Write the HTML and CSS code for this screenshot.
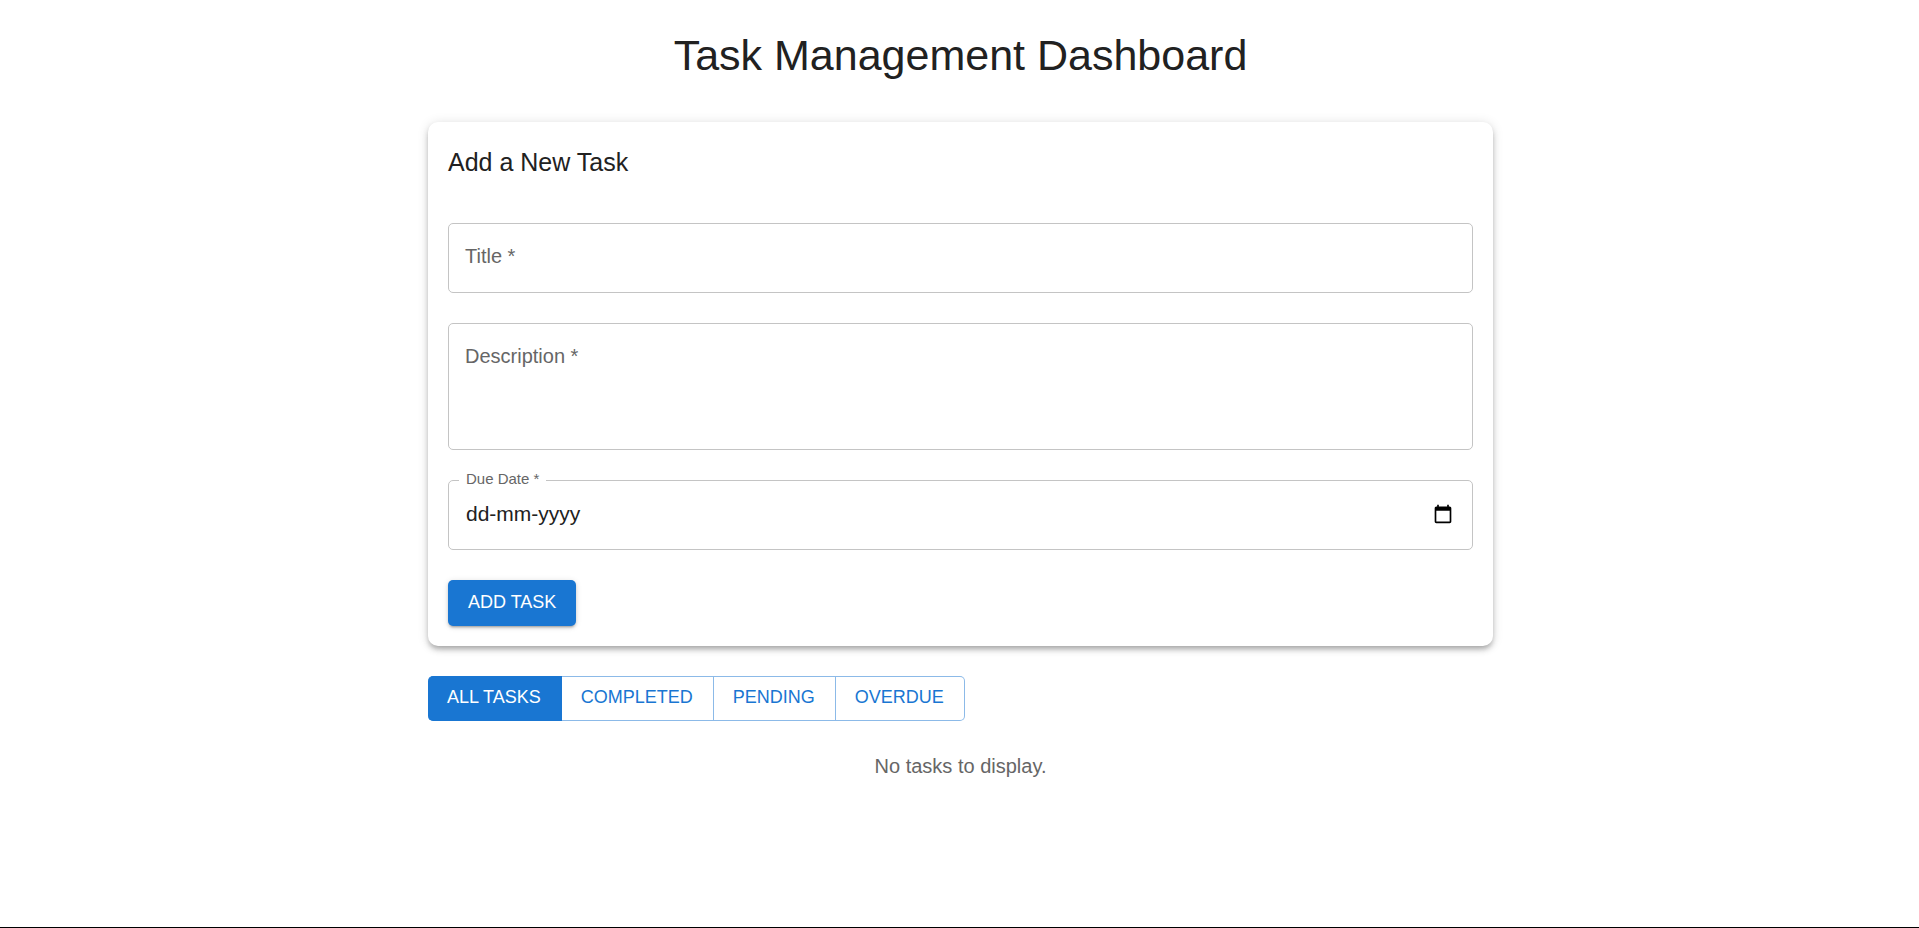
FILE: index.html
```html
<!DOCTYPE html>
<html lang="en">
<head>
<meta charset="utf-8">
<title>Task Management Dashboard</title>
<link rel="stylesheet" href="styles.css">
</head>
<body>
<main class="page">
  <div class="container">
    <h1 class="page-title">Task Management Dashboard</h1>

    <form class="card">
      <h2 class="card-title">Add a New Task</h2>
      <div class="field">
        <input class="control" id="title" type="text" required>
        <label class="label" for="title">Title&nbsp;*</label>
      </div>
      <div class="field">
        <textarea class="control control-multiline" id="description" required></textarea>
        <label class="label" for="description">Description&nbsp;*</label>
      </div>
      <div class="field">
        <input class="control control-date" id="due" type="text" placeholder="dd-mm-yyyy" required>
        <label class="label label-raised" for="due">Due Date&nbsp;*</label>
        <button class="picker" type="button" aria-label="Show date picker">
          <svg class="picker-icon" viewBox="0 0 24 24" aria-hidden="true">
            <path d="M20 3h-1V1h-2v2H7V1H5v2H4c-1.100 0-2 .9-2 2v16c0 1.100.9 2 2 2h16c1.100 0 2-.9 2-2V5c0-1.100-.9-2-2-2zm0 18H4V8h16v13z"/>
          </svg>
        </button>
      </div>
      <button class="button button-filled" type="submit">ADD TASK</button>
    </form>

    <div class="filters" role="group" aria-label="Filter tasks">
      <button class="button filter filter-active" type="button">ALL TASKS</button>
      <button class="button filter" type="button">COMPLETED</button>
      <button class="button filter" type="button">PENDING</button>
      <button class="button filter" type="button">OVERDUE</button>
    </div>

    <p class="empty">No tasks to display.</p>
  </div>
</main>
</body>
</html>
```

FILE: styles.css
```css
* {
  box-sizing: border-box;
}

body {
  margin: 0;
  background: #fff;
  color: #212121;
  font-family: "Liberation Sans", Arial, sans-serif;
  font-size: 20px;
  line-height: 30px;
}

.page {
  min-height: 100vh;
  padding: 29px 29px 29px 31px;
  border-bottom: 1px solid #000;
}

.container {
  max-width: 1065px;
  margin: 0 auto;
}

.page-title {
  margin: 0 0 41px;
  font-size: 43px;
  font-weight: 400;
  line-height: 52px;
  text-align: center;
}

.card {
  display: flex;
  flex-direction: column;
  align-items: flex-start;
  gap: 30px;
  padding: 20px;
  border-radius: 10px;
  background: #fff;
  box-shadow: 0 4px 5px -2px rgba(0, 0, 0, 0.2), 0 4px 6px rgba(0, 0, 0, 0.14), 0 1px 12px rgba(0, 0, 0, 0.12);
}

.card-title {
  margin: 0 0 11px;
  font-size: 25px;
  font-weight: 400;
  line-height: 40px;
}

.field {
  position: relative;
  width: 100%;
}

.control {
  display: block;
  width: 100%;
  padding: 18px 17px 20px;
  border: 1px solid #c4c4c4;
  border-radius: 5px;
  background: transparent;
  color: #212121;
  font: inherit;
}

.control-multiline {
  height: 127px;
  resize: none;
}

.control-date {
  padding-right: 60px;
  font-size: 21px;
}

.control::placeholder {
  color: #212121;
  opacity: 1;
}

.label {
  position: absolute;
  top: 18px;
  left: 17px;
  color: #666;
  pointer-events: none;
}

.label-raised {
  top: -11px;
  left: 11px;
  padding: 0 7px;
  background: #fff;
  font-size: 15px;
  line-height: 20px;
}

.picker {
  position: absolute;
  top: 0;
  bottom: 0;
  right: 20px;
  display: flex;
  align-items: center;
  padding: 0 0 2px;
  border: 0;
  background: none;
}

.picker-icon {
  width: 20px;
  height: 20px;
}

.button {
  padding: 7px 20px 9px;
  border: 0;
  border-radius: 5px;
  color: #1976d2;
  background: none;
  font-family: inherit;
  font-size: 18px;
  line-height: 30px;
}

.button-filled {
  background: #1976d2;
  color: #fff;
  box-shadow: 0 3px 2px -2px rgba(0, 0, 0, 0.2), 0 2px 3px rgba(0, 0, 0, 0.14), 0 1px 6px rgba(0, 0, 0, 0.12);
}

.filters {
  display: flex;
  margin: 30px 0;
}

.filter {
  padding: 6px 20px 8px 19px;
  border: 1px solid #8cbae8;
  border-left-width: 0;
  border-radius: 0;
  line-height: 29px;
}

.filter:last-child {
  border-radius: 0 5px 5px 0;
}

.filter-active {
  border-color: #1976d2;
  border-radius: 5px 0 0 5px;
  background: #1976d2;
  color: #fff;
}

.empty {
  margin: 0;
  color: #666;
  text-align: center;
}
```
